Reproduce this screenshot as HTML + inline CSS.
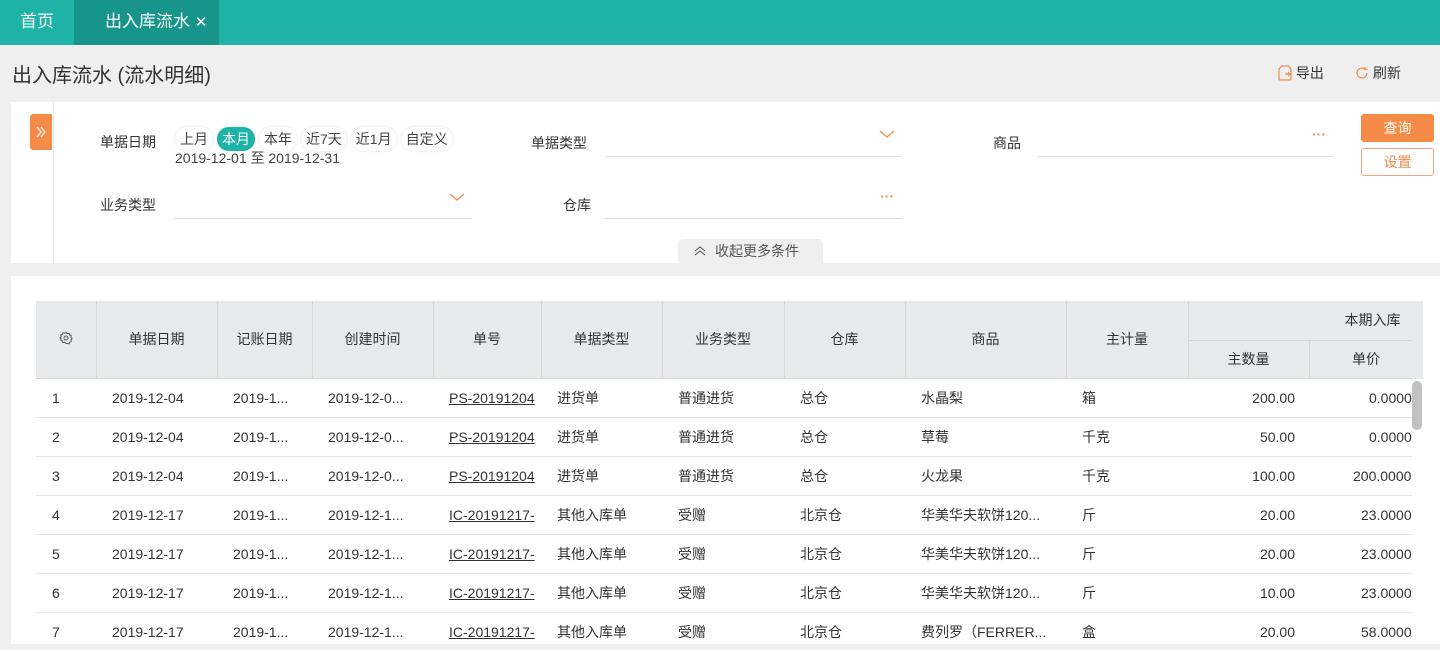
<!DOCTYPE html>
<html><head><meta charset="utf-8"><style>
*{box-sizing:border-box;margin:0;padding:0}
body{width:1440px;height:644px;overflow:hidden;background:#efefef;font-family:"Liberation Sans","Noto Sans CJK SC",sans-serif;color:#333;position:relative;font-size:14px}
.abs{position:absolute}
.top{left:0;top:0;width:1440px;height:45px;background:#1db3a6}
.tab{top:0;height:45px;line-height:43px;color:#fff;font-size:17px}
.chip{display:inline-block;height:24px;line-height:24px;padding:0 5px;border-radius:12px;background:#fff;box-shadow:0 0 2px #ddd;font-size:14px;color:#444;margin-right:4px}
.lbl{font-size:14px;color:#333}
.line{height:1px;background:#ddd}
.dots{color:#f08a4b;font-size:14px;font-weight:bold;letter-spacing:0px}
table{border-collapse:collapse;table-layout:fixed;position:absolute;left:36px;top:301px}
th{background:#e8e9eb;font-weight:normal;font-size:14px;color:#333;border-right:1px solid #d6d6d6;border-bottom:1px solid #d6d6d6;text-align:center}
td{height:39px;border-bottom:1px solid #e6e6e6;font-size:14px;color:#333;padding-left:16px;white-space:nowrap;overflow:hidden}
td.r{text-align:right;padding-right:14px;padding-left:0}
td u{color:#333}
</style></head><body>
<div class="abs top"></div>
<div class="abs tab" style="left:20px">首页</div>
<div class="abs tab" style="left:74px;width:145px;background:#17958b;padding-left:31px">出入库流水 <span style="font-size:15px">✕</span></div>
<div class="abs" style="left:12px;top:59px;font-size:20px;color:#333">出入库流水 (流水明细)</div>
<div class="abs" style="left:1278px;top:63px;font-size:14px"><svg width="14" height="16" viewBox="0 0 14 16" style="vertical-align:-3px"><path d="M4 1h6l3 3v10a1 1 0 0 1-1 1H2a1 1 0 0 1-1-1V4zM7 9h5M10 7l2 2-2 2" fill="none" stroke="#f08a4b" stroke-width="1.2"/></svg> 导出</div>
<div class="abs" style="left:1355px;top:63px;font-size:14px"><svg width="14" height="14" viewBox="0 0 14 14" style="vertical-align:-2px"><path d="M12 7a5 5 0 1 1-2-4M10 1v2.5h2.5" fill="none" stroke="#f08a4b" stroke-width="1.2"/></svg> 刷新</div>

<div class="abs" style="left:11px;top:102px;width:1429px;height:161px;background:#fff"></div>
<div class="abs" style="left:53px;top:102px;width:1px;height:161px;background:#ececec"></div>
<div class="abs" style="left:30px;top:114px;width:22px;height:36px;background:#f68b47;border-radius:3px 0 0 3px"><svg width="22" height="36" viewBox="0 0 22 36"><path d="M7 13l4 5-4 5M11 13l4 5-4 5" fill="none" stroke="#fff" stroke-width="1.2"/></svg></div>

<div class="abs lbl" style="left:100px;top:132px">单据日期</div>
<div class="abs" style="left:175px;top:127px"><span class="chip">上月</span><span class="chip" style="background:#1db3a6;color:#fff">本月</span><span class="chip">本年</span><span class="chip">近7天</span><span class="chip">近1月</span><span class="chip">自定义</span></div>
<div class="abs" style="left:175px;top:148px;font-size:14px;color:#444">2019-12-01 至 2019-12-31</div>

<div class="abs lbl" style="left:531px;top:133px">单据类型</div>
<div class="abs line" style="left:605px;top:156px;width:297px"></div>
<svg class="abs" style="left:879px;top:129px" width="16" height="10" viewBox="0 0 16 10"><path d="M1 2l7 6 7-6" fill="none" stroke="#f08a4b" stroke-width="1.3"/></svg>
<div class="abs lbl" style="left:993px;top:133px">商品</div>
<div class="abs line" style="left:1037px;top:156px;width:297px"></div>
<div class="abs dots" style="left:1312px;top:126px">···</div>

<div class="abs lbl" style="left:100px;top:195px">业务类型</div>
<div class="abs line" style="left:174px;top:218px;width:298px"></div>
<svg class="abs" style="left:449px;top:192px" width="16" height="10" viewBox="0 0 16 10"><path d="M1 2l7 6 7-6" fill="none" stroke="#f08a4b" stroke-width="1.3"/></svg>
<div class="abs lbl" style="left:563px;top:195px">仓库</div>
<div class="abs line" style="left:605px;top:218px;width:297px"></div>
<div class="abs dots" style="left:880px;top:188px">···</div>

<div class="abs" style="left:1361px;top:114px;width:73px;height:28px;background:#f68b47;border-radius:3px;color:#fff;text-align:center;line-height:28px">查询</div>
<div class="abs" style="left:1361px;top:148px;width:73px;height:28px;border:1px solid #f4a57a;border-radius:3px;color:#f08a4b;text-align:center;line-height:26px">设置</div>

<div class="abs" style="left:678px;top:239px;width:145px;height:24px;background:#efefef;border-radius:5px 5px 0 0;font-size:14px;color:#555;line-height:24px"><svg style="position:absolute;left:15px;top:6px" width="14" height="12" viewBox="0 0 14 12"><path d="M2 6l5-4 5 4M2 10l5-4 5 4" fill="none" stroke="#555" stroke-width="1.1"/></svg><span style="position:absolute;left:37px">收起更多条件</span></div>

<div class="abs" style="left:11px;top:276px;width:1429px;height:368px;background:#fff"></div>
<div class="abs" style="left:1412px;top:381px;width:10px;height:49px;background:#c1c1c1;border-radius:5px;z-index:2"></div>
<div class="abs" style="left:1188px;top:301px;width:235px;height:78px;background:#e8e9eb;z-index:0"></div>
<div class="abs" style="left:36px;top:290px;width:1376px;height:360px;overflow:hidden">
<table style="left:0;top:11px;width:1387px">
<colgroup><col style="width:60px"><col style="width:121px"><col style="width:95px"><col style="width:121px"><col style="width:108px"><col style="width:121px"><col style="width:122px"><col style="width:121px"><col style="width:161px"><col style="width:122px"><col style="width:121px"><col style="width:114px"></colgroup>
<tr style="height:39px"><th rowspan="2" style="height:77px"><svg width="14" height="14" viewBox="0 0 14 14"><circle cx="7" cy="7" r="2" fill="none" stroke="#555"/><path d="M7 1.5l1.3 1.2 1.7-.3.6 1.6 1.6.6-.3 1.7 1.2 1.3-1.2 1.3.3 1.7-1.6.6-.6 1.6-1.7-.3L7 12.5 5.7 11.3 4 11.6l-.6-1.6-1.6-.6.3-1.7L.9 7l1.2-1.3-.3-1.7 1.6-.6.6-1.6 1.7.3z" fill="none" stroke="#555" stroke-width="1"/></svg></th><th rowspan="2">单据日期</th><th rowspan="2">记账日期</th><th rowspan="2">创建时间</th><th rowspan="2">单号</th><th rowspan="2">单据类型</th><th rowspan="2">业务类型</th><th rowspan="2">仓库</th><th rowspan="2">商品</th><th rowspan="2">主计量</th><th colspan="2" style="text-align:right;padding-right:22px">本期入库</th></tr>
<tr style="height:38px"><th>主数量</th><th>单价</th></tr>
<tr><td>1</td><td>2019-12-04</td><td>2019-1...</td><td>2019-12-0...</td><td><u>PS-20191204</u></td><td>进货单</td><td>普通进货</td><td>总仓</td><td>水晶梨</td><td>箱</td><td class="r">200.00</td><td class="r" style="padding-right:0;text-align:left;padding-left:60px">0.0000</td></tr>
<tr><td>2</td><td>2019-12-04</td><td>2019-1...</td><td>2019-12-0...</td><td><u>PS-20191204</u></td><td>进货单</td><td>普通进货</td><td>总仓</td><td>草莓</td><td>千克</td><td class="r">50.00</td><td class="r" style="padding-right:0;text-align:left;padding-left:60px">0.0000</td></tr>
<tr><td>3</td><td>2019-12-04</td><td>2019-1...</td><td>2019-12-0...</td><td><u>PS-20191204</u></td><td>进货单</td><td>普通进货</td><td>总仓</td><td>火龙果</td><td>千克</td><td class="r">100.00</td><td class="r" style="padding-right:0;text-align:left;padding-left:44px">200.0000</td></tr>
<tr><td>4</td><td>2019-12-17</td><td>2019-1...</td><td>2019-12-1...</td><td><u>IC-20191217-</u></td><td>其他入库单</td><td>受赠</td><td>北京仓</td><td>华美华夫软饼120...</td><td>斤</td><td class="r">20.00</td><td class="r" style="padding-right:0;text-align:left;padding-left:52px">23.0000</td></tr>
<tr><td>5</td><td>2019-12-17</td><td>2019-1...</td><td>2019-12-1...</td><td><u>IC-20191217-</u></td><td>其他入库单</td><td>受赠</td><td>北京仓</td><td>华美华夫软饼120...</td><td>斤</td><td class="r">20.00</td><td class="r" style="padding-right:0;text-align:left;padding-left:52px">23.0000</td></tr>
<tr><td>6</td><td>2019-12-17</td><td>2019-1...</td><td>2019-12-1...</td><td><u>IC-20191217-</u></td><td>其他入库单</td><td>受赠</td><td>北京仓</td><td>华美华夫软饼120...</td><td>斤</td><td class="r">10.00</td><td class="r" style="padding-right:0;text-align:left;padding-left:52px">23.0000</td></tr>
<tr><td>7</td><td>2019-12-17</td><td>2019-1...</td><td>2019-12-1...</td><td><u>IC-20191217-</u></td><td>其他入库单</td><td>受赠</td><td>北京仓</td><td>费列罗（FERRER...</td><td>盒</td><td class="r">20.00</td><td class="r" style="padding-right:0;text-align:left;padding-left:52px">58.0000</td></tr>
</table></div>
</body></html>
